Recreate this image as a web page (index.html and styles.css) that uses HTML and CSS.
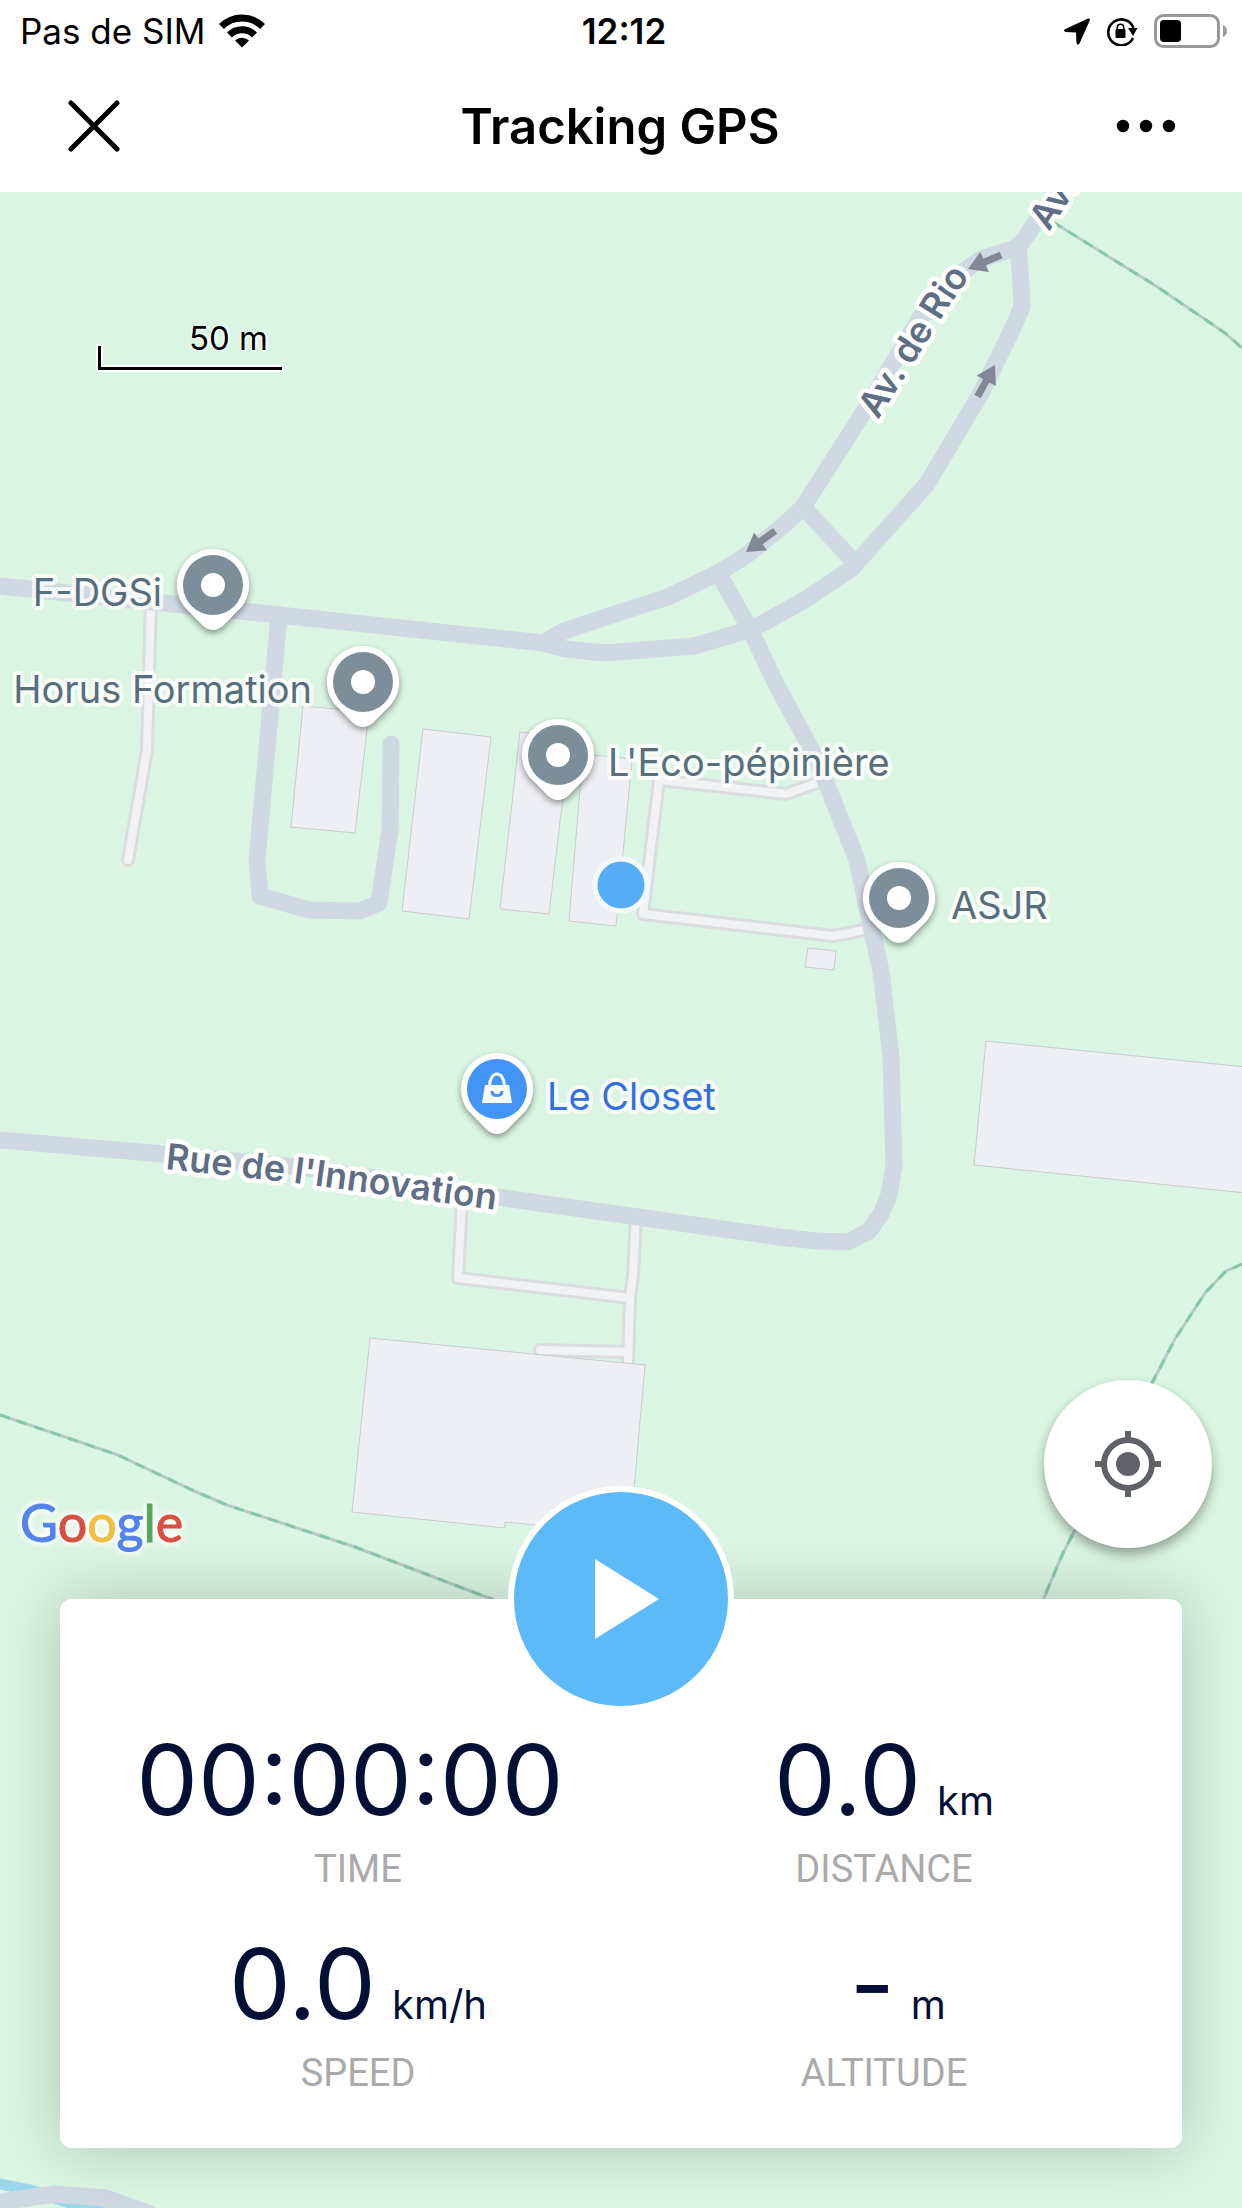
FILE: index.html
```html
<!DOCTYPE html>
<html lang="fr">
<head>
  <meta charset="UTF-8">
  <meta name="viewport" content="width=device-width, initial-scale=1">
  <title>Tracking GPS</title>
  <link rel="stylesheet" href="styles.css">
</head>
<body>
  <div class="status-bar">
    <div class="status-left">
      <span>Pas de SIM</span>
      <svg class="wifi" width="46" height="34" viewBox="0 0 46 34" fill="none" stroke="#000">
        <path d="M2.500 12.500A29 29 0 0 1 43.500 12.500" stroke-width="7"/>
        <path d="M10.500 21A17.500 17.500 0 0 1 35.500 21" stroke-width="7"/>
        <path d="M16 26.500A10 10 0 0 1 30 26.500L23 33.500Z" fill="#000" stroke="none"/>
      </svg>
    </div>
    <div class="status-time">12:12</div>
    <div class="status-right">
      <svg width="26" height="27" viewBox="0 0 26 27"><path d="M24 .5Q26.300 0 25.700 2.500L15.500 25.500Q13.500 28 12.500 25L12 14.500L1.500 14Q-1 13 .8 11.200Z"/></svg>
      <svg class="lock" width="32" height="30" viewBox="0 0 32 30">
        <path d="M27 22A13 13 0 1 1 27.500 12" fill="none" stroke="#000" stroke-width="2.600"/>
        <path d="M22 12H31.500L27 20Z"/>
        <rect x="9.500" y="13" width="10" height="9" rx="1"/>
        <path d="M11.300 14V11.500A3.200 3.200 0 0 1 17.700 11.500V14" fill="none" stroke="#000" stroke-width="1.600"/>
      </svg>
      <svg width="74" height="34" viewBox="0 0 74 34">
        <rect x="1.500" y="1.500" width="63" height="31" rx="8" fill="none" stroke="#999" stroke-width="3"/>
        <rect x="6" y="6" width="21" height="22" rx="4"/>
        <path d="M69 11Q73 13 73 17T69 23Z" fill="#999"/>
      </svg>
    </div>
  </div>

  <header class="nav-bar">
    <button class="nav-btn" aria-label="Fermer">
      <svg width="52" height="52" viewBox="0 0 52 52"><path d="M3 3L49 49M49 3L3 49" stroke="#000" stroke-width="5" stroke-linecap="round"/></svg>
    </button>
    <h1>Tracking GPS</h1>
    <button class="nav-btn" aria-label="Plus d'options">
      <svg width="60" height="14" viewBox="0 0 60 14"><circle cx="7" cy="7" r="6.200"/><circle cx="30" cy="7" r="6.200"/><circle cx="53" cy="7" r="6.200"/></svg>
    </button>
  </header>

  <main class="map-view">
    <svg class="map" viewBox="0 192 1242 2016" preserveAspectRatio="xMidYMin slice">
      <defs>
        <path id="arrow" d="M0 0L-18 -11V-3.500H-36V3.500H-18V11Z"/>
        <g id="pin">
          <path class="pin-body" d="M0 -36A36 36 0 0 1 29 21.500L10 41Q0 49 -10 41L-29 21.500A36 36 0 0 1 0 -36Z"/>
          <circle r="30"/>
        </g>
        <path id="rue" d="M165 1169L295 1183L500 1210.500"/>
        <path id="rio" d="M878 420L946 311L976 267"/>
        <path id="rio2" d="M1049 232L1150 74"/>
      </defs>

      <!-- sentiers -->
      <g class="trail">
        <path d="M1053 222L1156 286L1225 333L1242 348"/>
        <path d="M0 1415L118 1455L194 1491L227 1505L355 1547L494 1600"/>
        <path d="M1242 1264L1226 1271L1205 1293L1175 1339L1152 1383L1075 1530L1063 1553L1043 1600"/>
      </g>
      <g class="trail trail-dash">
        <path d="M1053 222L1156 286L1225 333L1242 348"/>
        <path d="M0 1415L118 1455L194 1491L227 1505L355 1547L494 1600"/>
        <path d="M1242 1264L1226 1271L1205 1293L1175 1339L1152 1383L1075 1530L1063 1553L1043 1600"/>
      </g>

      <path class="water" d="M-5 2183L30 2190L79 2206L110 2214"/>

      <!-- petites voies -->
      <g class="lane-edge">
        <path d="M151 600L148 714L147 750L128 860"/>
        <path d="M825 780L786 794L659 780L643 914L833 936L870 929"/>
        <path d="M462 1200L458 1278L630 1298"/>
        <path d="M636 1215L633 1276L630 1298L628 1364M540 1350L628 1352"/>
      </g>
      <g class="lane">
        <path d="M151 600L148 714L147 750L128 860"/>
        <path d="M825 780L786 794L659 780L643 914L833 936L870 929"/>
        <path d="M462 1200L458 1278L630 1298"/>
        <path d="M636 1215L633 1276L630 1298L628 1364M540 1350L628 1352"/>
      </g>

      <!-- routes -->
      <g class="road">
        <path d="M0 586L279 615L543 643L564 631L621 612L668 597L718 573L744 557L784 525L803 507L865 410L920 318L960 274L981 259L1019 247L1038 219L1090 140"/>
        <path d="M543 643L565 649L604 653L694 646L752 629L803 601L851 569L927 484L981 393L1012 330L1022 307L1021 283L1018 245"/>
        <path d="M803 507L855 563"/>
        <path d="M718 573L750 629L775 682L817 760L857 860L869 917L881 971L891 1057L894 1166L889 1195L881 1214L869 1231L848 1242L817 1241L779 1237L497 1197L308 1168L163 1154L0 1140"/>
        <path d="M279 615L257 860L260 896L309 910L360 911L379 903L390 830L391 744"/>
        <path d="M0 2202L55 2194L106 2198L150 2214"/>
      </g>

      <!-- bâtiments -->
      <g class="building">
        <path d="M303 706L369 712L355 833L291 827Z"/>
        <path d="M423 729L491 737L469 919L402 911Z"/>
        <path d="M520 732L570 738L549 914L500 909Z"/>
        <path d="M583 754L632 759L616 926L569 921Z"/>
        <path d="M808 948L836 951L834 970L805 967Z"/>
        <path d="M986 1041L1246 1067V1193L974 1165Z"/>
        <path d="M370 1338L645 1365L630 1534L505 1522V1528L352 1512Z"/>
      </g>

      <g class="arrows">
        <use href="#arrow" transform="translate(968 269) rotate(157)"/>
        <use href="#arrow" transform="translate(746 552) rotate(144)"/>
        <use href="#arrow" transform="translate(995 365) rotate(-61)"/>
      </g>

      <g class="street-label">
        <text><textPath href="#rio2">Av.</textPath></text>
        <text><textPath href="#rio">Av. de Rio</textPath></text>
        <text><textPath href="#rue">Rue de l'Innovation</textPath></text>
      </g>

      <g class="poi">
        <use href="#pin" transform="translate(213 585)"/>
        <use href="#pin" transform="translate(363 682)"/>
        <use href="#pin" transform="translate(558 755)"/>
        <use href="#pin" transform="translate(899 898)"/>
        <use class="shop" href="#pin" transform="translate(497 1089)"/>
        <circle class="hole" cx="213" cy="585" r="12"/>
        <circle class="hole" cx="363" cy="682" r="12"/>
        <circle class="hole" cx="558" cy="755" r="12"/>
        <circle class="hole" cx="899" cy="898" r="12"/>
        <g transform="translate(497 1089)">
          <path class="hole" d="M-12 -4H12L15 14H-15Z"/>
          <path class="handle" d="M-7.500 -3C-7 -19 7 -19 7.500 -3"/>
          <path class="smile" d="M-5 2Q-5 6.500 0 6.500T5 2"/>
        </g>
        <text x="162" y="606" text-anchor="end">F-DGSi</text>
        <text x="312" y="703" text-anchor="end">Horus Formation</text>
        <text x="608" y="776">L'Eco-pépinière</text>
        <text x="951" y="919">ASJR</text>
        <text class="shop" x="547" y="1110">Le Closet</text>
      </g>

      <circle class="me" cx="621" cy="885" r="26"/>
    </svg>

    <div class="overlay">
      <div class="scale">50 m</div>

      <div class="map-controls">
        <a class="google" href="#" aria-label="Google"><span class="b">G</span><span class="r">o</span><span class="y">o</span><span class="b">g</span><span class="g">l</span><span class="r">e</span></a>
        <button class="locate" aria-label="Ma position">
          <svg width="66" height="66" viewBox="0 0 66 66">
            <circle cx="33" cy="33" r="24" fill="none" stroke="#5f6368" stroke-width="6"/>
            <circle cx="33" cy="33" r="12" fill="#5f6368"/>
            <path d="M33 0V7M33 59V66M0 33H7M59 33H66" stroke="#5f6368" stroke-width="6"/>
          </svg>
        </button>
      </div>

      <section class="card">
        <button class="play" aria-label="Démarrer">
          <svg width="64" height="80" viewBox="0 0 64 80"><path d="M0 0L64 40L0 80Z" fill="#fff"/></svg>
        </button>
        <div class="stat">
          <div class="value">00:00:00<span class="unit"></span></div>
          <div class="label">TIME</div>
        </div>
        <div class="stat">
          <div class="value">0.0<span class="unit">km</span></div>
          <div class="label">DISTANCE</div>
        </div>
        <div class="stat">
          <div class="value">0.0<span class="unit">km/h</span></div>
          <div class="label">SPEED</div>
        </div>
        <div class="stat">
          <div class="value">&nbsp;-<span class="unit">m</span></div>
          <div class="label">ALTITUDE</div>
        </div>
      </section>
    </div>
  </main>
</body>
</html>
```
FILE: styles.css
```css
:root {
  --land: #daf5e3;
  --road: #d0d8e2;
  --navy: #031036;
  --blue: #5cbaf9;
}
* {
  box-sizing: border-box;
}
body {
  margin: 0;
  min-height: 100vh;
  display: flex;
  flex-direction: column;
  font-family: Inter, "Liberation Sans", sans-serif;
  background: #fff;
  color: #000;
}
button {
  border: none;
  padding: 0;
  background: none;
  cursor: pointer;
}
svg {
  display: block;
}

/* barre d'état */
.status-bar {
  display: grid;
  grid-template-columns: 1fr auto 1fr;
  align-items: center;
  height: 60px;
  padding: 0 14px 0 20px;
  font-size: 35px;
  line-height: 62px;
}
.status-left, .status-right {
  display: flex;
  align-items: center;
  gap: 14px;
}
.status-right {
  justify-content: flex-end;
  gap: 16px;
}
.status-time {
  font-weight: 600;
}

.nav-bar {
  display: flex;
  align-items: center;
  justify-content: space-between;
  height: 132px;
  padding: 0 66px 0 64px;
}
.nav-btn {
  width: 60px;
  height: 60px;
  display: flex;
  align-items: center;
  justify-content: center;
}
h1 {
  margin: 0;
  font-size: 49px;
  font-weight: 600;
}

/* carte */
.map-view {
  position: relative;
  flex: 1;
  display: flex;
  background: var(--land);
  overflow: hidden;
}
.map {
  position: absolute;
  top: 0;
  left: 0;
  width: 100%;
  height: 100%;
}
.map path {
  stroke-linejoin: round;
}
.trail {
  fill: none;
  stroke: #b9c8c9;
  stroke-width: 3;
}
.trail-dash {
  stroke: #86c6ab;
  stroke-dasharray: 10 8;
}
.water {
  fill: none;
  stroke: #9dd8ea;
  stroke-width: 11;
}
.lane-edge, .lane, .road {
  fill: none;
  stroke-linecap: round;
}
.lane-edge {
  stroke: #dadce0;
  stroke-width: 14;
}
.lane {
  stroke: #f1f2f4;
  stroke-width: 8;
}
.road {
  stroke: var(--road);
  stroke-width: 17;
}
.building {
  fill: #eeeff4;
  stroke: #c8cace;
  stroke-width: 1;
}
.arrows {
  fill: #828995;
}
.street-label {
  font-size: 36px;
  font-weight: 600;
  fill: #5f6d85;
  stroke: #fff;
  stroke-width: 9;
  stroke-linejoin: round;
  paint-order: stroke;
}
.poi {
  font-size: 38px;
  fill: #7c8e9a;
}
.poi text {
  fill: #566f7b;
  stroke: rgba(255, 255, 255, 0.8);
  stroke-width: 8;
  stroke-linejoin: round;
  paint-order: stroke;
}
.poi .shop {
  fill: #4294f7;
}
.poi text.shop {
  fill: #346fe2;
}
.pin-body {
  fill: #fff;
  filter: drop-shadow(0 3px 3px rgba(0, 0, 0, 0.4));
}
.hole {
  fill: #fff;
}
.handle {
  fill: none;
  stroke: #fff;
  stroke-width: 3;
}
.smile {
  fill: none;
  stroke: #4294f7;
  stroke-width: 3;
}
.me {
  fill: #57adf6;
  stroke: #f4f9fd;
  stroke-width: 5;
}

.overlay {
  position: relative;
  flex: 1;
  display: flex;
  flex-direction: column;
}
.scale {
  width: 184px;
  height: 54px;
  margin: 124px 0 0 98px;
  padding-right: 14px;
  text-align: right;
  font-size: 33px;
  line-height: 44px;
  text-shadow: 2px 0 2px #fff, -1px 0 1px #fff, 0 1px 1px #fff;
  position: relative;
}
.scale::after {
  content: "";
  position: absolute;
  left: 0;
  right: 0;
  bottom: 0;
  height: 21px;
  border-left: 3px solid #000;
  border-bottom: 3px solid #000;
  filter: drop-shadow(2px 0 0 #fff) drop-shadow(-2px 0 0 #fff) drop-shadow(0 2px 0 #fff) drop-shadow(0 -2px 0 #fff);
}
.map-controls {
  display: flex;
  align-items: flex-end;
  justify-content: space-between;
  margin: auto 30px 51px 20px;
}
.google {
  font-family: Lato, sans-serif;
  font-size: 52px;
  line-height: 52px;
  text-decoration: none;
  -webkit-text-stroke: 1px;
  filter: drop-shadow(0 0 3px #fff) drop-shadow(0 0 3px #fff);
}
.google .b { color: #5383ec; }
.google .r { color: #d85040; }
.google .y { color: #f1be42; }
.google .g { color: #58a55c; }
.locate {
  width: 168px;
  height: 168px;
  border-radius: 50%;
  display: flex;
  align-items: center;
  justify-content: center;
  background: #fff;
  box-shadow: 0 6px 12px rgba(0, 0, 0, 0.35);
}

/* panneau des mesures */
.card {
  position: relative;
  display: grid;
  grid-template-columns: 1fr 1fr;
  row-gap: 41px;
  margin: 0 60px 60px;
  padding: 131px 35px 51px;
  border-radius: 12px;
  background: #fff;
  box-shadow: 0 0 60px rgba(0, 0, 0, 0.2);
}
.play {
  position: absolute;
  top: 0;
  left: 50%;
  width: 226px;
  height: 226px;
  border: 6px solid #fff;
  border-radius: 50%;
  transform: translate(-50%, -50%);
  display: flex;
  align-items: center;
  justify-content: center;
  padding-left: 12px;
  background: var(--blue);
}
.stat {
  text-align: center;
}
.value {
  font-size: 98px;
  line-height: 100px;
  color: var(--navy);
  white-space: nowrap;
}
.unit {
  margin-left: 16px;
  font-size: 40px;
  line-height: 40px;
}
.label {
  margin-top: 15px;
  font-family: Roboto, sans-serif;
  font-size: 38px;
  line-height: 48px;
  color: #aaa;
}
```
